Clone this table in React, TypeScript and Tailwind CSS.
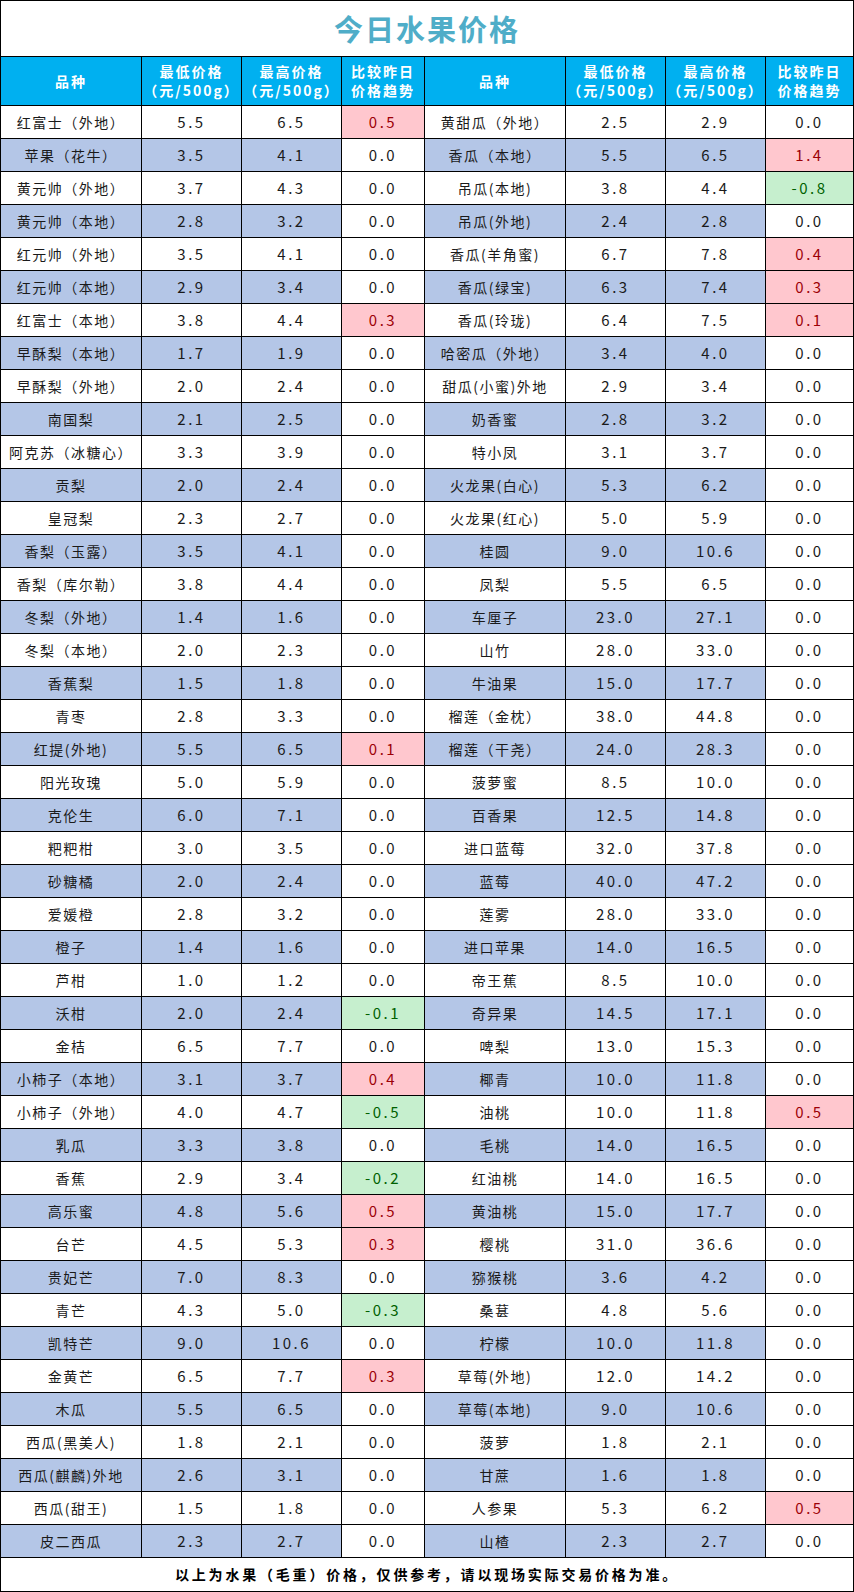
import React from "react";

type Row = [string, string, string, string];

const left: Row[] = [
  ["红富士（外地）", "5.5", "6.5", "0.5"],
  ["苹果（花牛）", "3.5", "4.1", "0.0"],
  ["黄元帅（外地）", "3.7", "4.3", "0.0"],
  ["黄元帅（本地）", "2.8", "3.2", "0.0"],
  ["红元帅（外地）", "3.5", "4.1", "0.0"],
  ["红元帅（本地）", "2.9", "3.4", "0.0"],
  ["红富士（本地）", "3.8", "4.4", "0.3"],
  ["早酥梨（本地）", "1.7", "1.9", "0.0"],
  ["早酥梨（外地）", "2.0", "2.4", "0.0"],
  ["南国梨", "2.1", "2.5", "0.0"],
  ["阿克苏（冰糖心）", "3.3", "3.9", "0.0"],
  ["贡梨", "2.0", "2.4", "0.0"],
  ["皇冠梨", "2.3", "2.7", "0.0"],
  ["香梨（玉露）", "3.5", "4.1", "0.0"],
  ["香梨（库尔勒）", "3.8", "4.4", "0.0"],
  ["冬梨（外地）", "1.4", "1.6", "0.0"],
  ["冬梨（本地）", "2.0", "2.3", "0.0"],
  ["香蕉梨", "1.5", "1.8", "0.0"],
  ["青枣", "2.8", "3.3", "0.0"],
  ["红提(外地)", "5.5", "6.5", "0.1"],
  ["阳光玫瑰", "5.0", "5.9", "0.0"],
  ["克伦生", "6.0", "7.1", "0.0"],
  ["粑粑柑", "3.0", "3.5", "0.0"],
  ["砂糖橘", "2.0", "2.4", "0.0"],
  ["爱媛橙", "2.8", "3.2", "0.0"],
  ["橙子", "1.4", "1.6", "0.0"],
  ["芦柑", "1.0", "1.2", "0.0"],
  ["沃柑", "2.0", "2.4", "-0.1"],
  ["金桔", "6.5", "7.7", "0.0"],
  ["小柿子（本地）", "3.1", "3.7", "0.4"],
  ["小柿子（外地）", "4.0", "4.7", "-0.5"],
  ["乳瓜", "3.3", "3.8", "0.0"],
  ["香蕉", "2.9", "3.4", "-0.2"],
  ["高乐蜜", "4.8", "5.6", "0.5"],
  ["台芒", "4.5", "5.3", "0.3"],
  ["贵妃芒", "7.0", "8.3", "0.0"],
  ["青芒", "4.3", "5.0", "-0.3"],
  ["凯特芒", "9.0", "10.6", "0.0"],
  ["金黄芒", "6.5", "7.7", "0.3"],
  ["木瓜", "5.5", "6.5", "0.0"],
  ["西瓜(黑美人)", "1.8", "2.1", "0.0"],
  ["西瓜(麒麟)外地", "2.6", "3.1", "0.0"],
  ["西瓜(甜王)", "1.5", "1.8", "0.0"],
  ["皮二西瓜", "2.3", "2.7", "0.0"],
];

const right: Row[] = [
  ["黄甜瓜（外地）", "2.5", "2.9", "0.0"],
  ["香瓜（本地）", "5.5", "6.5", "1.4"],
  ["吊瓜(本地)", "3.8", "4.4", "-0.8"],
  ["吊瓜(外地)", "2.4", "2.8", "0.0"],
  ["香瓜(羊角蜜)", "6.7", "7.8", "0.4"],
  ["香瓜(绿宝)", "6.3", "7.4", "0.3"],
  ["香瓜(玲珑)", "6.4", "7.5", "0.1"],
  ["哈密瓜（外地）", "3.4", "4.0", "0.0"],
  ["甜瓜(小蜜)外地", "2.9", "3.4", "0.0"],
  ["奶香蜜", "2.8", "3.2", "0.0"],
  ["特小凤", "3.1", "3.7", "0.0"],
  ["火龙果(白心)", "5.3", "6.2", "0.0"],
  ["火龙果(红心)", "5.0", "5.9", "0.0"],
  ["桂圆", "9.0", "10.6", "0.0"],
  ["凤梨", "5.5", "6.5", "0.0"],
  ["车厘子", "23.0", "27.1", "0.0"],
  ["山竹", "28.0", "33.0", "0.0"],
  ["牛油果", "15.0", "17.7", "0.0"],
  ["榴莲（金枕）", "38.0", "44.8", "0.0"],
  ["榴莲（干尧）", "24.0", "28.3", "0.0"],
  ["菠萝蜜", "8.5", "10.0", "0.0"],
  ["百香果", "12.5", "14.8", "0.0"],
  ["进口蓝莓", "32.0", "37.8", "0.0"],
  ["蓝莓", "40.0", "47.2", "0.0"],
  ["莲雾", "28.0", "33.0", "0.0"],
  ["进口苹果", "14.0", "16.5", "0.0"],
  ["帝王蕉", "8.5", "10.0", "0.0"],
  ["奇异果", "14.5", "17.1", "0.0"],
  ["啤梨", "13.0", "15.3", "0.0"],
  ["椰青", "10.0", "11.8", "0.0"],
  ["油桃", "10.0", "11.8", "0.5"],
  ["毛桃", "14.0", "16.5", "0.0"],
  ["红油桃", "14.0", "16.5", "0.0"],
  ["黄油桃", "15.0", "17.7", "0.0"],
  ["樱桃", "31.0", "36.6", "0.0"],
  ["猕猴桃", "3.6", "4.2", "0.0"],
  ["桑葚", "4.8", "5.6", "0.0"],
  ["柠檬", "10.0", "11.8", "0.0"],
  ["草莓(外地)", "12.0", "14.2", "0.0"],
  ["草莓(本地)", "9.0", "10.6", "0.0"],
  ["菠萝", "1.8", "2.1", "0.0"],
  ["甘蔗", "1.6", "1.8", "0.0"],
  ["人参果", "5.3", "6.2", "0.5"],
  ["山楂", "2.3", "2.7", "0.0"],
];

const GRID =
  "grid grid-cols-[141px_100px_100px_83px_141px_100px_100px_87px]";

function trendClass(v: string) {
  if (v.startsWith("-")) return "bg-[#c6efce] text-[#006100]";
  if (v !== "0.0") return "bg-[#ffc7ce] text-[#9c0006]";
  return "bg-white text-[#1a1a1a]";
}

function Cells({ row, blue, last }: { row: Row; blue: boolean; last: boolean }) {
  const bg = blue ? "bg-[#b4c6e7]" : "bg-white";
  const base =
    "h-[33px] flex items-center justify-center border-b border-black";
  return (
    <>
      <div className={`${base} ${bg} border-r text-[14px] tracking-[1.5px] text-[#1a1a1a]`}>
        {row[0]}
      </div>
      <div className={`${base} ${bg} border-r text-[15px] tracking-[2.5px] text-[#1a1a1a]`}>
        {row[1]}
      </div>
      <div className={`${base} ${bg} border-r text-[15px] tracking-[2.5px] text-[#1a1a1a]`}>
        {row[2]}
      </div>
      <div
        className={`${base} ${last ? "" : "border-r"} ${trendClass(row[3])} text-[15px] tracking-[2.5px]`}
      >
        {row[3]}
      </div>
    </>
  );
}

function HeaderCells({ last }: { last: boolean }) {
  const base =
    "h-[49px] flex flex-col items-center justify-center border-b border-black bg-[#00b0f0] text-white font-bold text-[14px] leading-[19px] tracking-[2px]";
  return (
    <>
      <div className={`${base} border-r`}>品种</div>
      <div className={`${base} border-r`}>
        <span>最低价格</span>
        <span>（元/500g）</span>
      </div>
      <div className={`${base} border-r`}>
        <span>最高价格</span>
        <span>（元/500g）</span>
      </div>
      <div className={`${base} ${last ? "" : "border-r"}`}>
        <span>比较昨日</span>
        <span>价格趋势</span>
      </div>
    </>
  );
}

export default function App() {
  return (
    <div
      className="w-[854px] bg-white border border-black [text-spacing-trim:space-all]"
      style={{ fontFamily: '"Noto Sans CJK SC", "Noto Sans", sans-serif' }}
    >
      <div className="h-[56px] flex items-center justify-center border-b border-black">
        <span className="text-[29px] font-bold tracking-[2px] text-[#4fadc8] leading-none">
          今日水果价格
        </span>
      </div>
      <div className={GRID}>
        <HeaderCells last={false} />
        <HeaderCells last={true} />
        {left.map((l, i) => (
          <React.Fragment key={i}>
            <Cells row={l} blue={i % 2 === 1} last={false} />
            <Cells row={right[i]} blue={i % 2 === 1} last={true} />
          </React.Fragment>
        ))}
      </div>
      <div className="h-[33px] flex items-center justify-center">
        <span className="text-[14px] font-bold tracking-[2.8px] text-black">
          以上为水果（毛重）价格，仅供参考，请以现场实际交易价格为准。
        </span>
      </div>
    </div>
  );
}
